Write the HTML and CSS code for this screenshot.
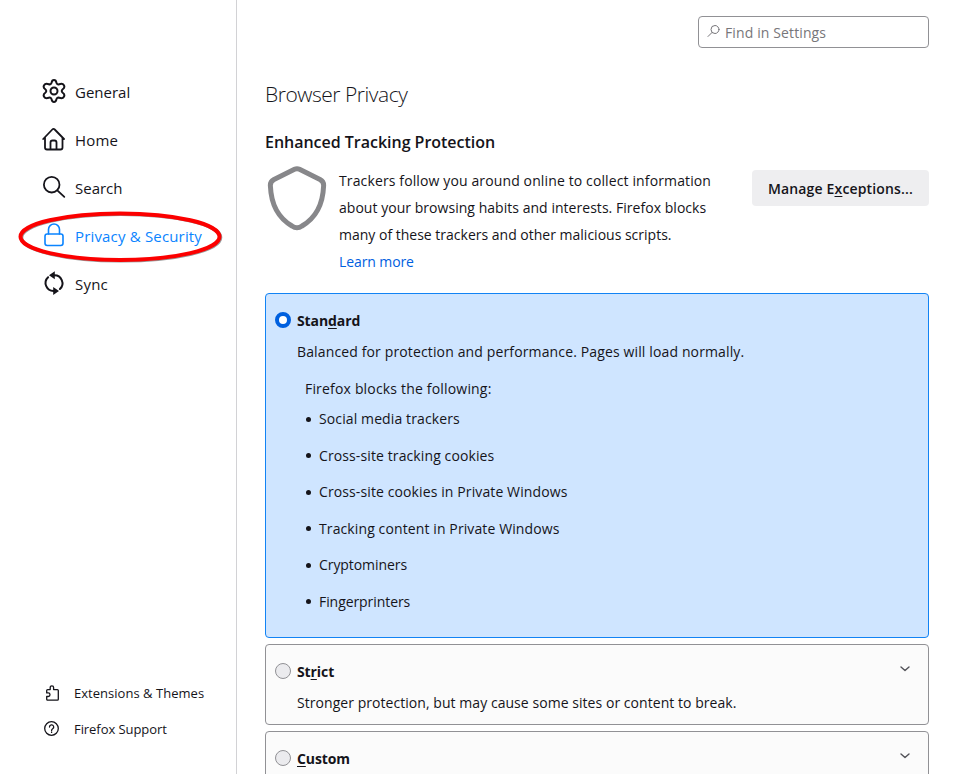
FILE: index.html
```html
<!DOCTYPE html>
<html lang="en">
<head>
<meta charset="utf-8">
<title>Settings</title>
<link rel="stylesheet" href="styles.css">
</head>
<body>
<div class="page">
  <aside class="sidebar">
    <nav class="categories">
      <a class="category"><svg class="icon bold" viewBox="0 0 24 24"><path d="M9.6 3.6Q10 1 12 1t2.4 2.6c.3 1.5 1.4 2.1 2.8 1.6 2.6-.9 3.8-.6 4.7 1 1 1.8.5 2.9-1.2 4.1-1.3 1-1.3 2.4 0 3.4 1.7 1.2 2.2 2.3 1.2 4.1-.9 1.6-2.1 1.9-4.7 1-1.4-.5-2.5.1-2.8 1.6Q14 23 12 23t-2.4-2.6c-.3-1.5-1.4-2.1-2.8-1.6-2.6.9-3.8.6-4.7-1-1-1.8-.5-2.9 1.2-4.1 1.3-1 1.3-2.4 0-3.4C1.600 9.100 1.100 8 2.100 6.200c.9-1.600 2.100-1.900 4.700-1 1.400.5 2.500-.1 2.800-1.600Z"/><circle cx="12" cy="12" r="3.500"/></svg><span>General</span></a>
      <a class="category"><svg class="icon" viewBox="0 0 24 24"><path d="M1.200 12 10.300 2.500Q11.500 1.300 12.700 2.500L22 12M3 10.500V20.500Q3 22.500 5 22.500H18.500Q20.500 22.500 20.500 20.500V10.500M8.500 22V15.500Q8.500 13.500 10.500 13.500H12.500Q14.500 13.500 14.500 15.500V22"/></svg><span class="t-home">Home</span></a>
      <a class="category"><svg class="icon" viewBox="0 0 24 24"><circle cx="9.700" cy="9.700" r="7.800"/><path d="m15.300 15.400 7 6.500"/></svg><span>Search</span></a>
      <a class="category selected"><svg class="icon" viewBox="0 0 24 24"><rect x="3" y="11" width="18" height="11.500" rx="2.200"/><path d="M6.500 11V6.500a5.500 5.500 0 0 1 11 0V11"/></svg><span class="t-privacy">Privacy &amp; Security</span><svg class="marker" viewBox="0 0 206 54"><ellipse class="shade" cx="103" cy="27.500" rx="99.500" ry="23.200"/><ellipse class="ring" cx="102" cy="26.700" rx="99.500" ry="23.200"/></svg></a>
      <a class="category"><svg class="icon bold" viewBox="0 0 24 24"><path d="M12 4.200A8 8 0 0 1 17.900 18M12 20A8 8 0 0 1 6.100 6.200"/><path class="solid" d="M12.800.2v8L7 4.200ZM11.200 16v8l5.800-4Z"/></svg><span class="t-sync">Sync</span></a>
    </nav>
    <div class="side-links">
      <a class="side-link"><svg class="small-icon" viewBox="0 0 16 16"><path d="M2.700 14V11.500H4.200a1.800 1.800 0 0 0 0-3.600H2.700V5.500Q2.700 4.600 3.600 4.600H6.200V2.500a1.700 1.700 0 0 1 3.400 0V4.600h3.800q.9 0 .9.900v8.700q0 .9-.9.900H3.600Q2.700 15.100 2.700 14Z"/></svg><span class="t-ext">Extensions &amp; Themes</span></a>
      <a class="side-link"><svg class="small-icon" viewBox="0 0 16 16"><circle cx="7.500" cy="7.500" r="6.800"/><path d="M5.500 6a2.100 2.100 0 1 1 3.200 1.700c-.7.500-1.100.8-1.100 1.700M7.600 11v.4"/></svg><span class="t-support">Firefox Support</span></a>
    </div>
  </aside>
  <main class="content">
    <div class="search"><svg class="search-icon" viewBox="0 0 14 14"><circle cx="8" cy="5.500" r="4"/><path d="m5 8.500-4 4"/></svg><span class="t-find">Find in Settings</span></div>
    <h1>Browser Privacy</h1>
    <h2>Enhanced Tracking Protection</h2>
    <section class="intro">
      <svg class="shield" viewBox="0 0 64 66"><path d="M29.500 4.300Q32 3 34.500 4.300L55 14.500Q59 16.700 58.600 21 57.500 49 37 61 32 64.500 27 61 6.500 49 5.400 21 5 16.700 9 14.500Z"/></svg>
      <p><span class="t-p1">Trackers follow you around online to collect information</span><br><span class="t-p2">about your browsing habits and interests. Firefox blocks</span><br><span>many of these trackers and other malicious scripts.</span><br><a class="learn">Learn more</a></p>
      <button>Manage E<u>x</u>ceptions...</button>
    </section>
    <section class="card active">
      <div class="card-head"><i class="radio"></i><b>Stan<u>d</u>ard</b></div>
      <p class="desc"><span class="t-balanced">Balanced for protection and performance. Pages will load normally.</span></p>
      <p class="blocks"><span>Firefox blocks the following:</span></p>
      <ul>
        <li><span>Social media trackers</span></li>
        <li><span>Cross-site tracking cookies</span></li>
        <li><span>Cross-site cookies in Private Windows</span></li>
        <li><span>Tracking content in Private Windows</span></li>
        <li><span class="t-tight">Cryptominers</span></li>
        <li><span class="t-tight">Fingerprinters</span></li>
      </ul>
    </section>
    <section class="card strict">
      <div class="card-head"><i class="radio"></i><b>St<u>r</u>ict</b><svg class="chevron" viewBox="0 0 10 6"><path d="m1 1 4 3.500L9 1"/></svg></div>
      <p class="desc"><span class="t-stronger">Stronger protection, but may cause some sites or content to break.</span></p>
    </section>
    <section class="card custom">
      <div class="card-head"><i class="radio"></i><b><u>C</u>ustom</b><svg class="chevron" viewBox="0 0 10 6"><path d="m1 1 4 3.500L9 1"/></svg></div>
    </section>
  </main>
</div>
</body>
</html>
```
FILE: styles.css
```css
* { box-sizing: border-box; }
body { margin: 0; height: 774px; overflow: hidden; background: #fff; color: #15141a; font: 14px/27px "Open Sans", "Noto Sans", sans-serif; }
h1, h2, p, ul { margin: 0; padding: 0; }
span, b { white-space: nowrap; }
svg { fill: none; stroke: currentColor; stroke-linecap: round; stroke-linejoin: round; flex: none; }
u { text-decoration-thickness: 1px; text-underline-offset: 2px; text-decoration-skip-ink: none; }
.page { display: flex; height: 774px; }
.sidebar { width: 237px; flex: none; border-right: 1px solid #d2d2d5; padding: 68px 0 27px 42px; display: flex; flex-direction: column; justify-content: space-between; }
.category { display: flex; align-items: center; height: 48px; gap: 9px; font-size: 15px; position: relative; }
.icon { width: 24px; height: 24px; stroke-width: 1.8; margin-top: -2px; }
.icon.bold { stroke-width: 2; }
.icon .solid { fill: currentColor; stroke: none; }
.selected { color: #0a84ff; }
.selected .icon { stroke-width: 1.6; }
.marker { position: absolute; left: -24px; top: -2px; width: 206px; height: 54px; }
.ring { stroke: #fc0000; stroke-width: 4; }
.shade { stroke: #999; stroke-width: 3.6; }
.side-link { display: flex; align-items: center; height: 36px; gap: 14px; font-size: 13px; }
.side-links { margin-left: 2px; }
.small-icon { width: 16px; height: 16px; stroke-width: 1.3; margin-top: -1px; }
.content { width: 664px; margin-left: 28px; padding-top: 16px; }
.search { width: 231px; height: 32px; margin-left: auto; border: 1px solid #919195; border-radius: 4px; display: flex; align-items: center; padding-left: 8px; gap: 4px; color: #77767a; }
.search-icon { width: 14px; height: 14px; margin-top: -2px; }
h1 { font-size: 21px; font-weight: 300; line-height: 30px; margin-top: 31px; letter-spacing: -.47px; }
h2 { font-size: 16px; font-weight: 600; line-height: 24px; margin-top: 21px; letter-spacing: -.02px; }
.intro { display: flex; height: 127px; padding-top: 1px; margin-top: 12px; }
.shield { width: 64px; height: 66px; stroke: #87878a; stroke-width: 5; margin-top: -2px; }
.intro p { margin-left: 10px; width: 413px; }
.learn { color: #0060df; letter-spacing: -.1px; }
button { width: 177px; height: 36px; border: 0; border-radius: 4px; background: #eeeef0; color: inherit; font: 600 14px "Open Sans", sans-serif; letter-spacing: .16px; padding: 0; margin-top: 3px; }
.card { border: 1px solid #919195; border-radius: 4px; background: #fbfbfb; padding: 13px 9px 0; margin-bottom: 6px; }
.card.active { height: 345px; background: #cfe5ff; border-color: #1283f4; }
.card.strict { height: 81px; }
.card.custom { height: 81px; }
.card-head { display: flex; align-items: center; height: 27px; letter-spacing: -.1px; }
.radio { width: 16px; height: 16px; border: 1px solid #919195; border-radius: 50%; background: #ebebee; margin: -1px 6px 0 0; }
.active .radio { border: 4px solid #0060df; background: #fff; }
.chevron { width: 10px; height: 6px; margin: -5px 9px 0 auto; stroke: #515157; stroke-width: 1.4; }
.desc { margin: 4px 0 0 22px; }
.blocks { margin: 10px 0 0 30px; letter-spacing: .18px; }
ul { list-style: none; margin: 3px 0 0 31px; letter-spacing: .11px; }
li { display: flex; align-items: center; height: 27px; margin-bottom: 9.6px; gap: 8px; }
li::before { content: ""; width: 5px; height: 5px; margin-top: 1px; border-radius: 50%; background: #15141a; }
.t-home { letter-spacing: .15px; }
.t-privacy { letter-spacing: .17px; }
.t-sync { letter-spacing: .2px; }
.t-ext { letter-spacing: .03px; }
.t-support { letter-spacing: -.07px; }
.t-find { letter-spacing: .12px; }
.t-p1 { letter-spacing: .125px; }
.t-p2 { letter-spacing: .036px; }
.t-balanced { letter-spacing: .135px; }
.t-stronger { letter-spacing: .05px; }
.t-tight { letter-spacing: -.07px; }
```
